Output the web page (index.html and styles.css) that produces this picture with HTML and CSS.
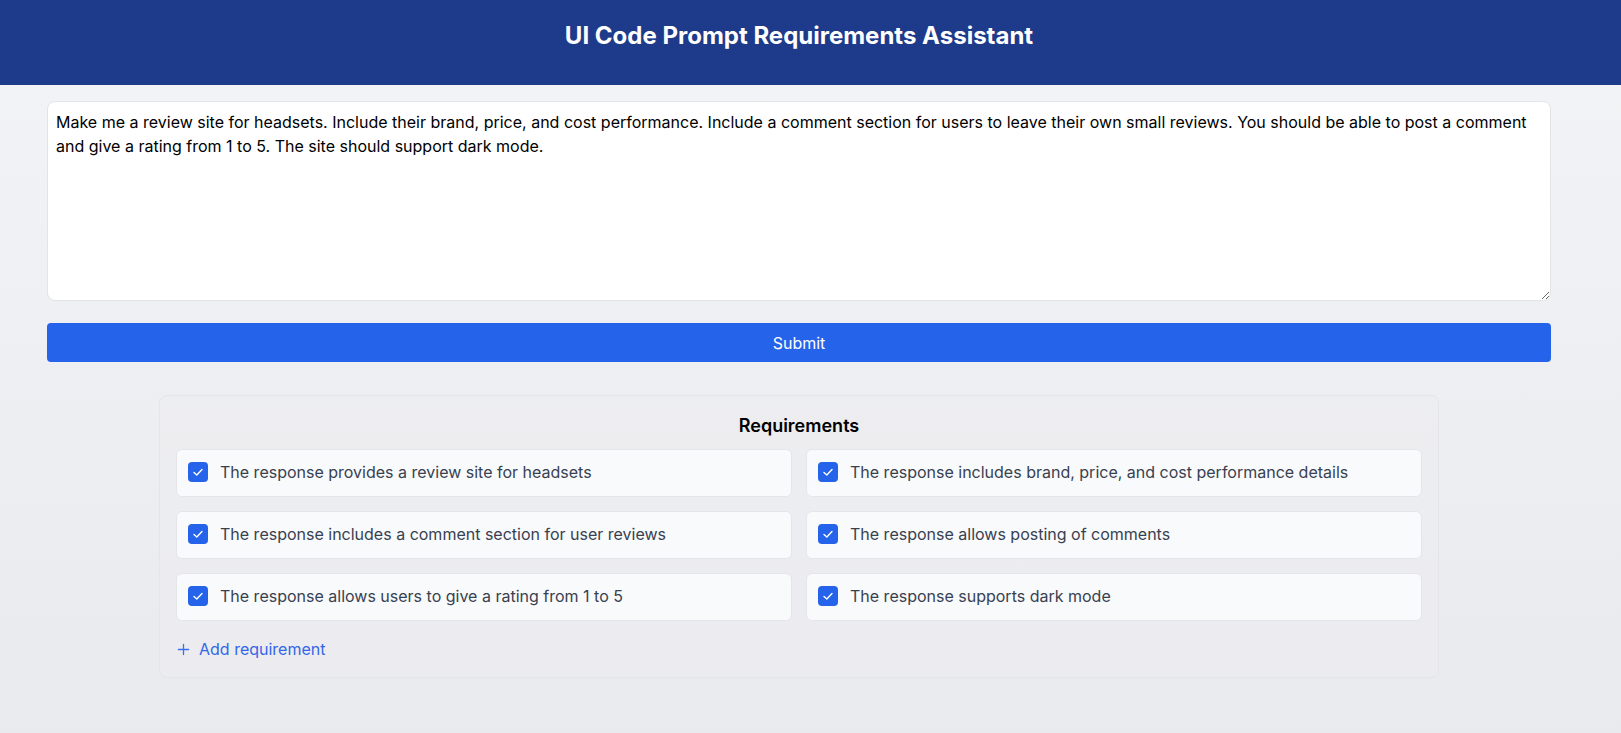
FILE: index.html
```html
<!DOCTYPE html>
<html lang="en">
<head>
<meta charset="utf-8">
<title>UI Code Prompt Requirements Assistant</title>
<link rel="stylesheet" href="styles.css">
</head>
<body>
<header class="top-bar">
  <h1 class="title">UI Code Prompt Requirements Assistant</h1>
</header>
<main class="main">
  <textarea class="prompt">Make me a review site for headsets. Include their brand, price, and cost performance. Include a comment section for users to leave their own small reviews. You should be able to post a comment and give a rating from 1 to 5. The site should support dark mode.</textarea>
  <button class="submit" type="button">Submit</button>
  <section class="panel">
    <h2 class="panel-title">Requirements</h2>
    <div class="req-grid">
      <label class="req"><span class="box"><svg viewBox="0 0 20 20" width="20" height="20"><polyline points="6,10.5 8.8,13 14,7.5" fill="none" stroke="#fff" stroke-width="1.4" stroke-linecap="round" stroke-linejoin="round"/></svg></span><span class="req-text">The response provides a review site for headsets</span></label>
      <label class="req"><span class="box"><svg viewBox="0 0 20 20" width="20" height="20"><polyline points="6,10.5 8.8,13 14,7.5" fill="none" stroke="#fff" stroke-width="1.4" stroke-linecap="round" stroke-linejoin="round"/></svg></span><span class="req-text">The response includes brand, price, and cost performance details</span></label>
      <label class="req"><span class="box"><svg viewBox="0 0 20 20" width="20" height="20"><polyline points="6,10.5 8.8,13 14,7.5" fill="none" stroke="#fff" stroke-width="1.4" stroke-linecap="round" stroke-linejoin="round"/></svg></span><span class="req-text">The response includes a comment section for user reviews</span></label>
      <label class="req"><span class="box"><svg viewBox="0 0 20 20" width="20" height="20"><polyline points="6,10.5 8.8,13 14,7.5" fill="none" stroke="#fff" stroke-width="1.4" stroke-linecap="round" stroke-linejoin="round"/></svg></span><span class="req-text">The response allows posting of comments</span></label>
      <label class="req"><span class="box"><svg viewBox="0 0 20 20" width="20" height="20"><polyline points="6,10.5 8.8,13 14,7.5" fill="none" stroke="#fff" stroke-width="1.4" stroke-linecap="round" stroke-linejoin="round"/></svg></span><span class="req-text">The response allows users to give a rating from 1 to 5</span></label>
      <label class="req"><span class="box"><svg viewBox="0 0 20 20" width="20" height="20"><polyline points="6,10.5 8.8,13 14,7.5" fill="none" stroke="#fff" stroke-width="1.4" stroke-linecap="round" stroke-linejoin="round"/></svg></span><span class="req-text">The response supports dark mode</span></label>
    </div>
    <button class="add" type="button"><svg viewBox="0 0 14 14" width="13" height="13"><path d="M7 1.5v11M1.5 7h11" stroke="#3b6ff0" stroke-width="1.4" stroke-linecap="round" fill="none"/></svg><span>Add requirement</span></button>
  </section>
</main>
</body>
</html>
```

FILE: styles.css
```css
* { box-sizing: border-box; }
html, body { margin: 0; padding: 0; }
body {
  font-family: Inter, "Noto Sans", "Liberation Sans", sans-serif;
  min-height: 733px;
  background: linear-gradient(to bottom, #f3f4f6 0%, #e9eaee 100%);
  color: #000;
}
.top-bar {
  background: #1e3a8a;
  height: 85px;
  padding: 20px 23px 0 0;
}
.title {
  margin: 0;
  text-align: center;
  color: #fff;
  font-size: 24px;
  line-height: 32px;
  font-weight: 700;
}
.main {
  margin-right: 23px;
  padding: 16px 47px 0;
}
.prompt {
  display: block;
  width: 100%;
  height: 200px;
  padding: 8px;
  border: 1px solid #e2e4e8;
  border-radius: 8px;
  background: #fff;
  font-family: inherit;
  font-size: 16px;
  line-height: 24px;
  color: #000;
  resize: vertical;
}
.submit {
  display: block;
  width: 100%;
  margin-top: 22px;
  height: 39px;
  border: none;
  border-radius: 4px;
  background: #2563eb;
  color: #fff;
  font-family: inherit;
  font-size: 16px;
  font-weight: 400;
}
.panel {
  max-width: 1280px;
  margin: 33px auto 0;
  border: 1px solid #e3e5e9;
  border-radius: 8px;
  padding: 16px 16px 16px;
  background: rgba(236, 237, 240, 0.6);
}
.panel-title {
  margin: 0 0 9px;
  text-align: center;
  font-size: 18px;
  line-height: 28px;
  font-weight: 600;
  color: #000;
}
.req-grid {
  display: grid;
  grid-template-columns: 1fr 1fr;
  gap: 14px;
}
.req {
  display: flex;
  align-items: flex-start;
  gap: 12px;
  height: 48px;
  padding: 12px 11px;
  background: #f9fafb;
  border: 1px solid #e4e6ea;
  border-radius: 6px;
}
.box {
  flex: none;
  width: 20px;
  height: 20px;
  border-radius: 4px;
  background: #2563eb;
  display: flex;
}
.req-text {
  font-size: 16px;
  line-height: 24px;
  color: #374151;
  margin-top: -2px;
}
.add {
  display: flex;
  align-items: center;
  gap: 9px;
  margin-top: 16px;
  padding: 0 0 0 1px;
  border: none;
  background: none;
  font-family: inherit;
  font-size: 16px;
  line-height: 24px;
  color: #3366e8;
}
```
